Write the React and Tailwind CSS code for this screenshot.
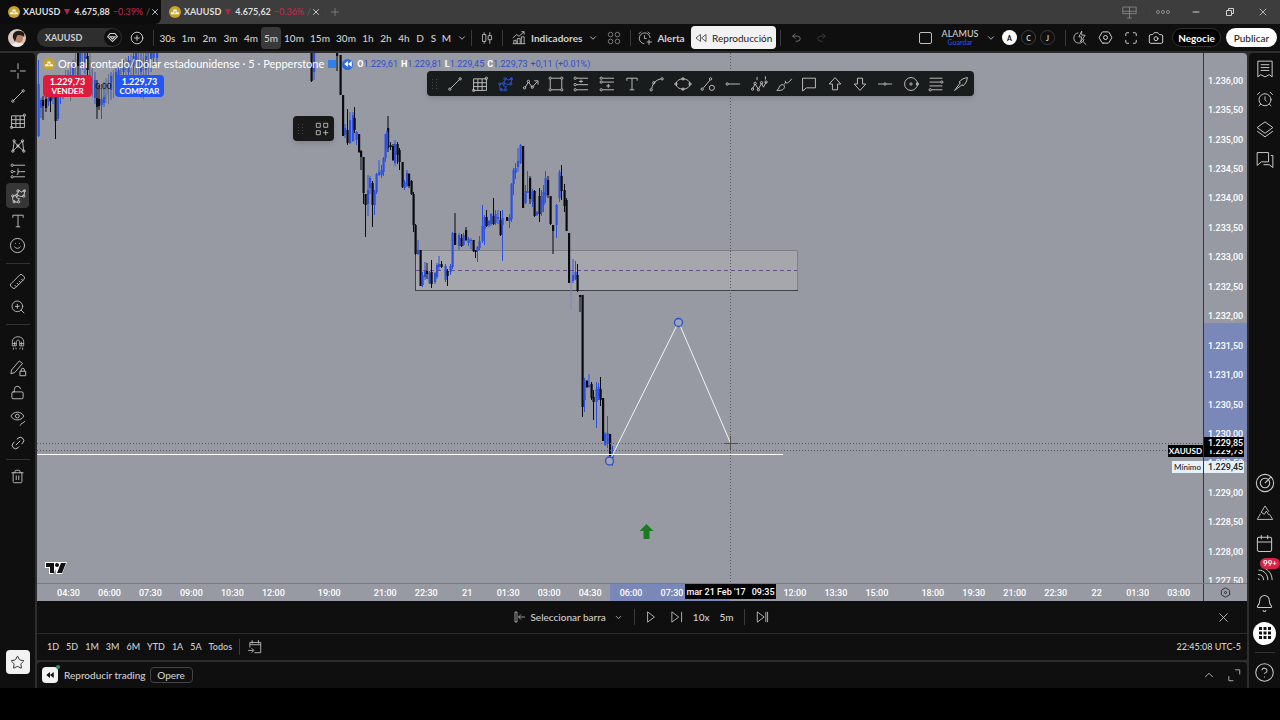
import { useState } from 'react';
import {
  AlarmClock, Bell, Calendar, Camera, ChevronDown, ChevronUp, CircleHelp, CirclePlus,
  Hexagon, Layers, Link2, LockOpen, Magnet, Maximize, Minus, Plus, Redo2, Ruler, Smile, Star, Trash2, Undo2, X, ZoomIn,
} from 'lucide-react';

// [x, high, low, open/close top, open/close bottom, color] -> b: blue, k: black, f: faded blue, g: gray
const candles = [
  [38.5, 60, 137, 84, 136, 'b'], [41, 98, 118, 100, 108, 'b'], [43, 96, 120, 100, 106, 'k'], [46, 96, 112, 99, 108, 'k'],
  [48.5, 94, 106, 98, 102, 'b'], [50.5, 92, 112, 97, 101, 'k'], [53, 88, 104, 95, 99, 'b'], [55.5, 94, 139, 97, 121, 'k'],
  [58, 84, 121, 88, 119, 'b'], [60.5, 80, 104, 84, 94, 'b'], [63, 76, 99, 80, 92, 'b'], [65.5, 70, 94, 76, 88, 'g'],
  [68, 70, 95, 76, 85, 'b'], [70.5, 68, 101, 72, 84, 'g'], [73, 60, 95, 66, 80, 'b'], [75.5, 53, 90, 58, 74, 'g'],
  [78, 53, 80, 53, 66, 'k'], [80, 53, 84, 53, 62, 'b'], [82.5, 53, 70, 53, 60, 'g'], [85, 53, 74, 53, 62, 'b'],
  [87.5, 53, 82, 56, 70, 'k'], [90, 53, 92, 60, 80, 'g'], [92.5, 64, 97, 70, 88, 'g'], [95, 72, 104, 80, 98, 'b'],
  [97, 80, 119, 98, 107, 'k'], [99, 85, 110, 99, 106, 'k'], [101.5, 84, 119, 99, 105, 'b'], [104, 82, 107, 97, 103, 'b'],
  [106, 78, 103, 95, 99, 'g'], [108.5, 74, 104, 80, 95, 'g'], [111, 72, 100, 76, 90, 'b'], [113.5, 70, 98, 74, 82, 'g'],
  [116, 68, 92, 72, 80, 'b'], [118.5, 66, 88, 70, 76, 'b'], [121, 62, 86, 68, 74, 'g'], [123.5, 60, 84, 64, 72, 'b'],
  [126, 58, 80, 62, 70, 'g'], [128.5, 56, 88, 60, 72, 'b'], [131, 54, 80, 60, 68, 'g'], [133.5, 53, 76, 56, 66, 'b'],
  [136, 53, 74, 53, 64, 'b'], [138.5, 53, 97, 56, 68, 'g'], [141, 53, 98, 60, 72, 'b'], [143.5, 53, 99, 58, 70, 'g'],
  [146, 53, 90, 56, 70, 'b'], [148.5, 53, 78, 53, 62, 'g'], [151, 53, 72, 53, 60, 'b'], [153.5, 53, 66, 53, 58, 'b'],
  [157, 53, 62, 53, 58, 'b'],
  [311.5, 53, 82, 53, 81, 'k'], [314, 53, 80, 53, 72, 'b'], [337, 53, 71, 53, 56, 'k'], [340.5, 55, 95, 55, 95, 'k'],
  [343, 95, 136, 95, 136, 'k'], [345, 124, 138, 128, 135, 'b'], [347.5, 109, 145, 130, 143, 'k'], [350, 112, 144, 120, 143, 'b'],
  [353, 112, 142, 115, 141, 'b'], [354.5, 107, 133, 118, 130, 'k'], [356.5, 131, 145, 132, 140, 'b'], [359, 134, 153, 134, 152, 'k'],
  [361, 150, 170, 151, 157, 'k'], [363.5, 157, 204, 157, 193, 'k'], [365.5, 194, 237, 194, 205, 'k'], [368, 175, 216, 190, 204, 'b'],
  [370, 176, 194, 178, 188, 'b'], [372.5, 181, 227, 183, 205, 'k'], [374.5, 190, 215, 192, 205, 'b'], [376.5, 173, 194, 174, 192, 'b'],
  [379, 160, 176, 172, 175, 'b'], [381.5, 165, 178, 170, 175, 'b'], [383.5, 157, 176, 158, 172, 'b'], [385.5, 134, 162, 134, 158, 'b'],
  [388, 116, 152, 128, 148, 'k'], [387, 130, 150, 132, 148, 'b'], [390.5, 142, 150, 145, 147, 'k'], [393, 144, 161, 146, 160, 'k'],
  [395, 140, 166, 144, 163, 'b'], [397.5, 142, 164, 144, 155, 'k'], [399.5, 148, 170, 150, 162, 'k'], [402.5, 162, 188, 162, 187, 'k'],
  [404.5, 180, 190, 182, 188, 'b'], [407, 170, 187, 173, 186, 'b'], [409, 173, 188, 174, 186, 'k'], [411.5, 180, 195, 181, 194, 'k'],
  [413.5, 192, 232, 194, 225, 'k'], [415.5, 224, 255, 225, 254, 'k'], [418, 240, 255, 250, 254, 'b'], [420.5, 250, 286, 250, 286, 'k'],
  [422.5, 272, 287, 275, 285, 'b'], [425, 262, 280, 271, 277, 'b'], [427, 263, 279, 271, 274, 'k'], [429.5, 271, 284, 273, 283, 'b'],
  [431.5, 260, 288, 272, 284, 'k'], [435, 272, 284, 273, 282, 'b'], [437, 263, 279, 265, 277, 'b'], [439, 256, 270, 264, 267, 'b'],
  [441.5, 261, 268, 264, 267, 'k'], [445.5, 264, 282, 266, 280, 'b'], [447.5, 269, 286, 271, 276, 'k'], [450.5, 264, 275, 266, 272, 'b'],
  [452.5, 232, 269, 233, 267, 'b'], [455, 213, 245, 233, 245, 'k'], [459, 233, 250, 235, 246, 'b'], [461.5, 234, 247, 238, 246, 'k'],
  [463.5, 233, 246, 235, 245, 'b'], [466, 227, 241, 230, 240, 'k'], [468.5, 237, 246, 239, 243, 'b'], [471, 238, 249, 240, 241, 'b'],
  [473.5, 240, 252, 240, 251, 'k'], [475.5, 250, 258, 250, 252, 'k'], [477.5, 246, 262, 247, 251, 'b'], [479.5, 236, 250, 241, 248, 'b'],
  [482.5, 205, 243, 226, 241, 'b'], [484.5, 215, 245, 217, 229, 'b'], [486.5, 210, 227, 217, 226, 'k'], [489, 220, 227, 221, 225, 'b'],
  [491, 213, 226, 214, 224, 'b'], [493.5, 198, 225, 216, 224, 'k'], [495.5, 210, 225, 214, 223, 'b'], [498, 210, 224, 217, 219, 'b'],
  [500.5, 211, 236, 220, 235, 'k'], [502.5, 210, 261, 218, 225, 'b'], [507, 217, 221, 217, 221, 'k'], [509.5, 214, 228, 218, 221, 'b'],
  [511.5, 183, 222, 184, 219, 'b'], [513.5, 168, 195, 170, 184, 'b'], [515.5, 163, 179, 168, 173, 'b'], [518, 148, 172, 161, 167, 'b'],
  [520.5, 144, 164, 145, 163, 'b'], [523, 146, 208, 146, 208, 'k'], [525.5, 185, 204, 191, 203, 'b'], [527.5, 171, 193, 191, 193, 'b'],
  [530, 176, 204, 178, 199, 'k'], [532.5, 189, 207, 191, 202, 'b'], [534.5, 190, 217, 191, 216, 'k'], [537, 211, 216, 212, 215, 'b'],
  [539.5, 188, 222, 196, 214, 'k'], [541.5, 190, 216, 197, 212, 'b'], [543.5, 185, 212, 192, 205, 'b'], [545.5, 171, 203, 178, 196, 'b'],
  [548, 176, 198, 180, 195, 'k'], [550.5, 196, 225, 196, 224, 'k'], [553, 225, 254, 225, 231, 'k'], [556.5, 204, 238, 205, 225, 'b'],
  [559.5, 170, 202, 172, 198, 'b'], [561.5, 165, 200, 176, 191, 'k'], [564.5, 184, 212, 190, 206, 'k'], [566.5, 198, 231, 200, 231, 'k'],
  [569, 233, 283, 233, 283, 'k'], [571, 272, 310, 280, 282, 'f'], [573, 259, 283, 275, 281, 'b'], [575.5, 261, 280, 272, 279, 'b'],
  [577.5, 264, 292, 275, 291, 'k'], [580, 295, 312, 295, 297, 'k'], [582.5, 295, 417, 295, 407, 'k'], [584.5, 378, 412, 380, 400, 'b'],
  [587, 380, 388, 381, 387, 'k'], [589, 374, 388, 385, 387, 'b'], [591.5, 382, 400, 384, 398, 'k'], [593.5, 390, 420, 397, 402, 'k'],
  [596.5, 382, 428, 389, 402, 'b'], [598.5, 383, 400, 387, 398, 'b'], [600.5, 377, 406, 389, 400, 'k'], [603, 398, 441, 398, 441, 'k'],
  [605, 432, 446, 434, 445, 'b'], [607.5, 416, 448, 433, 444, 'b'], [610, 434, 458, 434, 456, 'k'], [612.5, 446, 466, 452, 458, 'b'],
];

const candleColors = { b: '#2c50e0', k: '#0a0b10', f: '#7f86b8', g: '#6b6e7c' };

const intervals = [
  ['30s', 'w-[21px]'], ['1m', 'w-[21px]'], ['2m', 'w-[21px]'], ['3m', 'w-[21px]'], ['4m', 'w-[20px]'], ['5m', 'w-[20px]'],
  ['10m', 'w-[26px]'], ['15m', 'w-[26px]'], ['30m', 'w-[26px]'], ['1h', 'w-[18px]'], ['2h', 'w-[18px]'], ['4h', 'w-[18px]'],
  ['D', 'w-[14px]'], ['S', 'w-[13px]'], ['M', 'w-[13px]'],
];

const ranges = ['1D', '5D', '1M', '3M', '6M', 'YTD', '1A', '5A', 'Todos'];

const prices = [
  '1.236,00', '1.235,50', '1.235,00', '1.234,50', '1.234,00', '1.233,50', '1.233,00', '1.232,50', '1.232,00',
  '1.231,50', '1.231,00', '1.230,50', '1.230,00', '1.229,50', '1.229,00', '1.228,50', '1.228,00', '1.227,50',
];

// null leaves the market-closed gap, '' is a slot hidden under the crosshair date
const times = [
  '04:30', '06:00', '07:30', '09:00', '10:30', '12:00', null, '19:00', null, '21:00', '22:30', '21', '01:30', '03:00',
  '04:30', '06:00', '07:30', '', '', '12:00', '13:30', '15:00', null, '18:00', '19:30', '21:00', '22:30', '22',
  '01:30', '03:00',
];

// dots are the small anchor rings: [cx, cy]
const shapes = {
  cross: { d: 'M14 2v9M14 17v9M2 14h9M17 14h9' },
  line: { d: 'M7.4 20.6 20.6 7.4', dots: [[6, 22], [22, 6]] },
  grid: { d: 'M4 6h20v18H4zM4 12h20M4 18h20M10.7 6v18M17.3 6v18', dots: [[4, 24], [24, 5]] },
  pattern: { d: 'M6 22 8 7l6 7 7-8 2 16-9-8-8 8', dots: [[6, 22], [8, 6], [14, 14], [21, 6], [23, 22]] },
  forecast: { d: 'M7 5h18M7 15h3M18 15h7M14 10v9M14 15h4M7 23h18M14 19h-2', dots: [[5, 5], [5, 15], [5, 23]] },
  path: { d: 'M7 22c-3-5-1-10 4-9l1 4 4 1-3 6zM12 12l4-7 3 3 5-3v6l-3 4-5-1z', dots: [[6, 14], [8, 23], [15, 23], [14, 6], [24, 6], [23, 14], [12, 13]] },
  text: { d: 'M6 9V5h16v4M14 5v18M10.5 23h7' },
  zigzag: { d: 'M5 19 10 11l6 8 8-9M19 9h6v6', dots: [[4, 20], [10, 10], [16, 19]] },
  rect: { d: 'M7 5h14M7 23h14M5 7v14M23 7v14', dots: [[5, 5], [23, 5], [5, 23], [23, 23]] },
  long: { d: 'M7 5h18M7 15h18M7 23h18M14 7v5M11 10h6', dots: [[5, 5], [5, 15], [5, 23]] },
  short: { d: 'M7 5h18M7 11h18M7 23h18M16 14v6M13 17h6', dots: [[5, 5], [5, 11], [5, 23]] },
  curve: { d: 'M6 21C7 13 12 8 20 6', dots: [[5, 23], [9, 12], [22, 6]] },
  ellipse: { d: 'M3 14c1-5 5-8 11-8s10 3 11 8c-1 5-5 8-11 8S4 19 3 14z', dots: [[14, 6], [14, 22], [3, 14], [25, 14]] },
  measure: { d: 'M7 20 17 8M16 20a4 4 0 1 0 8 0 4 4 0 1 0-8 0', dots: [[5, 22], [18, 6]] },
  ray: { d: 'M7 14h18', dots: [[5, 14]] },
  elliott: { d: 'M4 21l4-7 5 8 5-9 3 6 4-8M11 3v5M24 2v5', dots: [[4, 22], [8, 13], [13, 23], [18, 12], [25, 11]] },
  brush: { d: 'M3 24c4-2 3-9 8-9 4 0 5 4 2 7-2 2-6 2-10 2zM14 15l3-4M16 9c0 5 4 5 10-3' },
  callout: { d: 'M4 5h20v15H10l-6 5z' },
  up: { d: 'M14 4l9 10h-5v9h-8v-9H5z' },
  down: { d: 'M14 24l9-10h-5V5h-8v9H5z' },
  hline: { d: 'M3 14h9M16 14h9', dots: [[14, 14]] },
  circle: { d: 'M4 14a10 10 0 1 0 20 0 10 10 0 1 0-20 0', dots: [[14, 14], [24, 14]] },
  fib: { d: 'M4 5h20M4 11h17M4 17h20M7 23h17', dots: [[23, 11], [5, 23]] },
  arrow: { d: 'M4 24 13 12l-2-1C15 6 19 5 24 4c-1 5-2 9-7 13l-1-2z' },
  candlesticks: { d: 'M9 4v4M9 20v4M6 8h6v12H6zM19 4v6M19 17v7M16 10h6v7h-6z' },
  indicators: { d: 'M3 24h22M5 24v-6h4v6M11 24v-9h5v9M18 24V12h5v12M3 14l7-6 4 3 9-8M18 3h5v5' },
  alarm: { d: 'M13 24a9.5 9.5 0 1 1 10-10M13 9v6h4M3 7l4-4M19 3l4 4M21 17v9M17 21h9' },
  rewind: { d: 'M13 7v14L4 14zM24 7v14l-9-7z' },
  fourDots: { d: 'M4 8a4 4 0 1 0 8 0 4 4 0 1 0-8 0M16 8a4 4 0 1 0 8 0 4 4 0 1 0-8 0M4 20a4 4 0 1 0 8 0 4 4 0 1 0-8 0M16 20a4 4 0 1 0 8 0 4 4 0 1 0-8 0' },
  quickSearch: { d: 'M11 5a9 9 0 1 0 10 11M19 20l6 6M17 2l-5 10h5l-2 9 8-12h-6z' },
  penLock: { d: 'M3 23l1-6L16 3l5 4L9 21zM17 19h9v7h-9zM19 19v-2a2.5 2.5 0 0 1 5 0v2' },
  eye: { d: 'M3 11c4-8 16-8 20 0-4 8-16 8-20 0zM10 11a3 3 0 1 0 6 0 3 3 0 1 0-6 0M17 26c2-1 1-4 4-4l4-3' },
  magnet: { d: 'M8 19H4v-7C4 0 24 0 24 12v7h-4M8 19h3v-7c0-4 6-4 6 0v7h3M4 15h7M17 15h7M6 22v4M10 22l1 3M22 22v4M18 22l-1 3M8 19V12M20 19v-7' },
  news: { d: 'M4 3h20v22l-4-3-6 3-6-3-4 3zM8 8h12M8 12h12M8 16h12' },
  layers: { d: 'M3 12 14 4l11 8-11 8zM3 17l11 8 11-8' },
  chat: { d: 'M3 5h16v13H9l-6 5zM22 9h3v17l-5-4H12' },
  target: { d: 'M3 14a11 11 0 1 0 22 0 11 11 0 1 0-22 0M8 14a6 6 0 1 0 12 0 6 6 0 1 0-12 0M14 14l8-8' },
  pyramid: { d: 'M14 3 8 13l5 3 3-5 4 6M7 15l-5 9h24l-5-8M14 3l6 9' },
  stream: { d: 'M4 22a2 2 0 0 1 2 2M4 16c5 0 8 3 8 8M5 10c8 0 13 6 13 14M12 7c7 2 12 9 12 17' },
  goTo: { d: 'M5 15V6h19v18H13M9 2v6M20 2v6M2 20h9M8 16l4 4-4 4M5 10h19' },
  selectBar: { d: 'M4 4h4v20H4zM11 14h13M16 9l-5 5 5 5' },
  play: { d: 'M8 5v18l12-9z' },
  step: { d: 'M5 5v18l12-9zM22 5v18' },
  skip: { d: 'M4 5v18l12-9zM19 5v18M22 5v18' },
  expand: { d: 'M16 5h8v8M5 16v8h8' },
  panes: { d: 'M3 5h22v11H3zM14 5v18M3 12h22M10 23h8' },
  favGrid: { d: 'M4 4h7v7H4zM17 4h7v7h-7zM4 17h7v7H4zM20.5 16v9M16 20.5h9' },
};

function Shape({ name, className = 'size-[18px]' }) {
  const { d, dots = [] } = shapes[name];
  return (
    <svg viewBox="0 0 28 28" className={className} fill="none" stroke="currentColor" strokeWidth="1.4" aria-hidden="true">
      <path d={d} />
      {dots.map(([cx, cy]) => (
        <circle key={`${cx}-${cy}`} cx={cx} cy={cy} r="1.8" />
      ))}
    </svg>
  );
}

function GoldCoin() {
  return (
    <svg viewBox="0 0 24 24" className="size-3 shrink-0" aria-hidden="true">
      <circle cx="12" cy="12" r="12" fill="#c9a227" />
      <path d="M9.5 7h5l1.5 4H8zM5 12.5h5.5l1.5 4H3.5zM13.5 12.5H19l1.5 4H12z" fill="#fff" />
    </svg>
  );
}

function Sep() {
  return <span className="h-4 w-px shrink-0 bg-[#3a3a3a]" />;
}

function Grip() {
  return (
    <svg viewBox="0 0 8 12" className="h-3 w-2 shrink-0 text-[#444]" fill="currentColor" aria-hidden="true">
      {[1, 4, 7, 10].map((y) => (
        <g key={y}>
          <rect x="1" y={y} width="1" height="1" />
          <rect x="5" y={y} width="1" height="1" />
        </g>
      ))}
    </svg>
  );
}

function Tab({ price, change, active }) {
  return (
    <div className={`flex w-[161px] shrink-0 items-center pr-1 pl-2 text-[9px] font-bold ${active ? 'rounded-br-md bg-[#0c0c0c]' : ''}`}>
      <GoldCoin />
      <span className="ml-[3px] text-[#dedede]">XAUUSD</span>
      <svg viewBox="0 0 6 6" className="mx-1 size-1.5 shrink-0" aria-hidden="true"><path d="M0 0h6L3 6z" fill="#b8204a" /></svg>
      <span className="text-[#dedede]">{price}</span>
      <span className="ml-[3px] font-normal text-[#d0264e]">{change}</span>
      <span className="ml-[3px] font-normal text-[#666]">/</span>
      <button aria-label="Cerrar pestaña" className="ml-auto text-[#dedede]"><X size={10} strokeWidth={2} /></button>
    </div>
  );
}

function TopBar({ interval, setInterval }) {
  return (
    <header className="flex h-[27px] items-center bg-[#0f0f0f] text-[#d0d0d0]">
      <button aria-label="Perfil" className="ml-2 size-[18px] shrink-0 overflow-hidden rounded-full">
        <svg viewBox="0 0 18 18" aria-hidden="true">
          <rect width="18" height="18" fill="#d8c8bd" />
          <path d="M3 18c1-4 4-5 7-5s6 2 7 5z" fill="#f1ece8" />
          <ellipse cx="11" cy="9" rx="4" ry="5" fill="#b88468" />
          <path d="M5 9c-1-5 3-8 7-7 4 0 5 3 4 6-2-2-5-2-6-2-2 1-2 5-3 7z" fill="#231a18" />
        </svg>
      </button>
      <button className="ml-[11px] flex h-[19px] w-[85px] shrink-0 items-center justify-between rounded-full bg-[#2e2e2e] pr-px pl-2 text-[9px] font-bold">
        XAUUSD
        <span className="grid size-[17px] place-items-center rounded-full bg-[#0f0f0f]">
          <svg viewBox="0 0 16 16" className="size-[13px]" fill="none" stroke="currentColor" strokeWidth="1.3" aria-hidden="true">
            <path d="M5 3h6l3 4-6 6-6-6zM5 7h6l-3 3z" />
          </svg>
        </span>
      </button>
      <button aria-label="Comparar" className="mr-[9px] ml-2 shrink-0"><CirclePlus size={14} strokeWidth={1.6} /></button>
      <Sep />
      <div className="ml-[3px] flex font-medium">
        {intervals.map(([label, width]) => (
          <button
            key={label}
            onClick={() => setInterval(label)}
            className={`flex h-[22px] items-center justify-center rounded ${width} ${interval === label ? 'bg-[#3a3a3a]' : ''}`}
          >
            {label}
          </button>
        ))}
      </div>
      <button aria-label="Más intervalos" className="mr-1 ml-1"><ChevronDown size={10} /></button>
      <Sep />
      <button aria-label="Velas" className="mx-[7px]"><Shape name="candlesticks" className="size-4" /></button>
      <Sep />
      <button className="ml-2 flex items-center gap-1 font-bold"><Shape name="indicators" className="size-4" />Indicadores</button>
      <button aria-label="Favoritos" className="ml-1.5"><ChevronDown size={10} /></button>
      <button aria-label="Plantillas" className="mr-2 ml-2 text-[#909090]"><Shape name="fourDots" className="size-4" /></button>
      <Sep />
      <button className="ml-1.5 flex items-center gap-1 font-bold"><Shape name="alarm" className="size-4" />Alerta</button>
      <button className="mr-1 ml-1.5 flex h-[23px] w-[85px] shrink-0 items-center justify-center gap-1 rounded bg-[#f2f2f2] text-[#1c1c1c]">
        <Shape name="rewind" className="size-3.5" />Reproducción
      </button>
      <Sep />
      <button aria-label="Deshacer" className="ml-2.5 text-[#909090]"><Undo2 size={11} strokeWidth={1.6} /></button>
      <button aria-label="Rehacer" className="ml-[14px] text-[#4a4a4a]"><Redo2 size={11} strokeWidth={1.6} /></button>

      <div className="ml-auto flex items-center pr-[3px]">
        <button aria-label="Diseño" className="h-3 w-[13px] rounded-xs border border-[#c0c0c0]" />
        <button className="ml-2.5 flex w-9 flex-col items-center text-[9px] leading-[9px] font-medium">
          ALAMUS
          <span className="text-[7px] leading-[8px] text-[#2450e8]">Guardar</span>
        </button>
        <button aria-label="Diseños" className="mr-[6px] ml-2"><ChevronDown size={10} /></button>
        <div className="flex gap-1 text-[7px] font-bold">
          <button className="size-[15px] rounded-full bg-white text-black">A</button>
          <button className="size-[15px] rounded-full border border-[#3c3c3c]">C</button>
          <button className="size-[15px] rounded-full border border-[#3c3c3c]">J</button>
        </div>
        <span className="mr-1.5 ml-2.5 flex"><Sep /></span>
        <button aria-label="Búsqueda rápida"><Shape name="quickSearch" className="size-4" /></button>
        <button aria-label="Ajustes" className="relative ml-2.5 grid place-items-center">
          <Hexagon size={15} strokeWidth={1.6} className="rotate-90" />
          <span className="absolute size-[5px] rounded-full border border-current" />
        </button>
        <button aria-label="Pantalla completa" className="ml-[11px]"><Maximize size={14} strokeWidth={1.6} /></button>
        <button aria-label="Captura" className="ml-2.5"><Camera size={16} strokeWidth={1.5} /></button>
        <button className="ml-2 h-[19px] w-[49px] rounded-full border border-[#2e2e2e] bg-black font-bold text-white">Negocie</button>
        <button className="ml-[5px] h-[19px] w-[51px] rounded-full bg-white font-medium text-[#1c1c1c]">Publicar</button>
      </div>
    </header>
  );
}

const railButton = 'grid h-[25px] w-[23px] place-items-center rounded';

function LeftRail() {
  return (
    <aside className="flex w-[35px] shrink-0 flex-col items-center rounded-tr bg-[#0f0f0f] pt-[5px] pb-[14px] text-[#c8c8c8]">
      <button aria-label="Cursor" className={railButton}><Shape name="cross" /></button>
      <button aria-label="Línea" className={railButton}><Shape name="line" /></button>
      <button aria-label="Gann" className={railButton}><Shape name="grid" /></button>
      <button aria-label="Patrones" className={railButton}><Shape name="pattern" /></button>
      <button aria-label="Previsión" className={railButton}><Shape name="forecast" /></button>
      <button aria-label="Formas" className={`${railButton} bg-[#363636]`}><Shape name="path" /></button>
      <button aria-label="Texto" className={railButton}><Shape name="text" /></button>
      <button aria-label="Iconos" className={railButton}><Smile size={17} strokeWidth={1.3} /></button>
      <span className="my-[5px] h-px w-6 bg-[#333]" />
      <button aria-label="Medir" className={railButton}><Ruler size={17} strokeWidth={1.3} className="rotate-90" /></button>
      <button aria-label="Ampliar" className={railButton}><ZoomIn size={16} strokeWidth={1.3} /></button>
      <span className="my-[5px] h-px w-6 bg-[#333]" />
      <button aria-label="Imán" className={railButton}><Shape name="magnet" className="size-4" /></button>
      <button aria-label="Modo dibujo" className={railButton}><Shape name="penLock" /></button>
      <button aria-label="Bloquear" className={railButton}><LockOpen size={15} strokeWidth={1.4} /></button>
      <button aria-label="Ocultar" className={railButton}><Shape name="eye" /></button>
      <button aria-label="Sincronizar" className={railButton}><Link2 size={16} strokeWidth={1.4} className="-rotate-45" /></button>
      <span className="my-1 h-px w-6 bg-[#333]" />
      <button aria-label="Eliminar" className={railButton}><Trash2 size={15} strokeWidth={1.4} /></button>
      <button aria-label="Favoritos" className="mt-auto grid size-6 place-items-center rounded bg-[#f2f2f2] text-[#1c1c1c]">
        <Star size={15} strokeWidth={1.4} />
      </button>
    </aside>
  );
}

const sideButton = 'grid h-[30px] w-full place-items-center';

function RightRail() {
  return (
    <aside className="flex w-[31px] shrink-0 flex-col items-center rounded-tl bg-[#0f0f0f] pt-px pb-px text-[#c8c8c8]">
      <button aria-label="Lista de seguimiento" className={sideButton}><Shape name="news" className="size-5" /></button>
      <button aria-label="Alertas" className={sideButton}><AlarmClock size={18} strokeWidth={1.3} /></button>
      <button aria-label="Datos" className={sideButton}><Shape name="layers" className="size-5" /></button>
      <button aria-label="Chats" className={sideButton}><Shape name="chat" className="size-5" /></button>
      <button aria-label="Filtros" className={`${sideButton} mt-auto`}><Shape name="target" className="size-[22px]" /></button>
      <button aria-label="Pine" className={sideButton}><Shape name="pyramid" className="size-[18px]" /></button>
      <button aria-label="Calendario" className={sideButton}><Calendar size={19} strokeWidth={1.3} /></button>
      <button aria-label="Comunidad" className={`${sideButton} relative`}>
        <Shape name="stream" className="size-5" />
        <span className="absolute top-0 right-0 rounded-full bg-[#d6234a] px-[3px] text-[8px] leading-[11px] font-bold text-white">99+</span>
      </button>
      <button aria-label="Notificaciones" className={sideButton}><Bell size={19} strokeWidth={1.3} /></button>
      <button aria-label="Productos" className={sideButton}>
        <span className="grid size-[23px] place-items-center rounded-full bg-white">
          <svg viewBox="0 0 12 12" className="size-3" fill="#111">
            {[0, 4.5, 9].map((y) => [0, 4.5, 9].map((x) => <rect key={`${x}-${y}`} x={x} y={y} width="3" height="3" />))}
          </svg>
        </span>
      </button>
      <span className="mt-1 mb-1 h-px w-5 bg-[#333]" />
      <button aria-label="Ayuda" className={sideButton}><CircleHelp size={21} strokeWidth={1.2} /></button>
    </aside>
  );
}

function Plot() {
  return (
    <svg viewBox="37 53 1166 530" preserveAspectRatio="none" className="absolute inset-0 size-full" aria-label="XAUUSD">
      <rect x="415.5" y="250.5" width="382" height="40" fill="#a5a7ad" />
      <path d="M415 250.5H797.5V290" stroke="#7e8088" fill="none" />
      <path d="M415 290.5H798M415.5 250V290" stroke="#3e4047" />
      <path d="M416 270.5H797" stroke="#69508a" strokeDasharray="4 3" />
      {candles.map(([x, high, low, top, bottom, c]) => (
        <g key={x} fill={candleColors[c]}>
          <rect x={x - 0.5} y={high} width="1" height={low - high} />
          <rect x={x - 1} y={top} width={c === 'g' ? 1 : 2.2} height={bottom - top} />
        </g>
      ))}
      <path d="M37 443.5H1203M37 450.5H1203M730.5 53V583" stroke="#55575f" strokeDasharray="1 2" />
      <path d="M37 454.5H783" stroke="#fff" />
      <path d="M611 458 678.5 322 730.5 443" stroke="#f4f4f4" fill="none" />
      <path d="M724 443.5h14M730.5 436v14" stroke="#55524c" />
      <circle cx="678.5" cy="322.5" r="4" fill="#9ea4bb" stroke="#2d50c8" strokeWidth="1.3" />
      <circle cx="609.5" cy="461" r="4" fill="#9ea4bb" stroke="#2d50c8" strokeWidth="1.3" />
      <path d="M646.5 524l7 7h-4v8h-6v-8h-4z" fill="#1c7a24" />
    </svg>
  );
}

const toolbarTools = [
  'line', 'grid', 'path', 'zigzag', 'rect', 'long', 'short', 'text', 'curve', 'ellipse', 'measure', 'ray', 'elliott',
  'brush', 'callout', 'up', 'down', 'hline', 'circle', 'fib', 'arrow',
];

function Chart() {
  return (
    <div className="relative flex-1 overflow-hidden">
      <Plot />

      <div className="absolute top-1 left-1.5 flex items-center text-[11px] leading-[14px] text-white">
        <GoldCoin />
        <h1 className="ml-[3px]">Oro al contado/Dólar estadounidense · 5 · Pepperstone</h1>
        <span className="ml-1 h-2 w-[8px] bg-[#2f80e8]" />
        <span className="ml-1.5 grid size-[11px] place-items-center rounded-full bg-[#2f6be0]">
          <svg viewBox="0 0 10 8" className="h-1.5 w-2" fill="#fff"><path d="M5 0v8L0 4zM10 0v8L5 4z" /></svg>
        </span>
        <p className="ml-1 flex gap-[3px] font-['Roboto',sans-serif] text-[9px] text-[#2f4fd0]">
          <span><b className="text-white">O</b>1.229,61</span>
          <span><b className="text-white">H</b>1.229,81</span>
          <span><b className="text-white">L</b>1.229,45</span>
          <span><b className="text-white">C</b>1.229,73</span>
          <span>+0,11 (+0.01%)</span>
        </p>
      </div>

      <div className="absolute top-[22px] left-1.5 flex items-center text-center text-[9px] font-bold text-white">
        <button className="h-[22px] w-[49px] rounded bg-[#e0193f] leading-[10px]">
          1.229,73<span className="block text-[8px] leading-[9px]">VENDER</span>
        </button>
        <span className="w-[23px] text-[8px] font-normal text-black">0.00</span>
        <button className="h-[22px] w-[49px] rounded bg-[#2456f5] leading-[10px]">
          1.229,73<span className="block text-[8px] leading-[9px]">COMPRAR</span>
        </button>
      </div>

      <div className="absolute top-[63px] left-64 flex h-[25px] w-[41px] items-center justify-between rounded bg-[#191919] px-1 text-[#d0d0d0] shadow-md">
        <Grip />
        <button aria-label="Añadir herramienta"><Shape name="favGrid" className="size-4" /></button>
      </div>

      <div className="absolute top-[18px] left-[390px] flex h-[25px] w-[547px] items-center rounded bg-[#191c1c] pl-1 text-[#c8c8c8] shadow-md">
        <Grip />
        <div className="ml-[3px] flex flex-1">
          {toolbarTools.map((tool) => (
            <button key={tool} aria-label={tool} className={`grid flex-1 place-items-center ${tool === 'path' ? 'text-[#2b55e0]' : ''}`}>
              <Shape name={tool} />
            </button>
          ))}
        </div>
      </div>

      <svg viewBox="0 0 24 14" className="absolute bottom-2 left-[7px] h-3.5 w-6" aria-label="TradingView">
        <path d="M1 1h22l-5 12h-6V8L9 13H5V7H1z" fill="#fff" />
        <path d="M2 2h8v10H6V6H2zM17 2h5l-4 10h-5z" fill="#111" />
        <circle cx="13" cy="4" r="2" fill="#111" />
      </svg>

      <span className="absolute top-[392px] right-0 bg-black px-px text-[8px] leading-[12px] font-bold text-white">XAUUSD</span>
      <span className="absolute top-[408px] right-0 bg-[#e6f1fa] px-[2px] text-[8px] leading-[12px] font-medium text-[#222]">Mínimo</span>
    </div>
  );
}

function PriceAxis() {
  return (
    <div className="relative flex w-11 flex-col overflow-hidden border-l border-[#33353c] font-['Roboto',sans-serif] text-[9px] font-medium text-white">
      <span className="absolute top-[270px] h-[139px] w-full bg-[#7a88b9]" />
      <div className="relative mt-[13px] -mb-[13px] flex flex-1 flex-col">
        {prices.map((price) => (
          <span key={price} className="flex flex-1 items-center pl-1">{price}</span>
        ))}
      </div>
      <span className="absolute top-[392px] w-10 bg-black pl-1 leading-[12px]">1.229,73</span>
      <span className="absolute top-[384px] w-10 bg-black pl-1 leading-[13px]">1.229,85</span>
      <span className="absolute top-[408px] w-10 bg-[#e6f1fa] pl-1 leading-[12px] text-[#222]">1.229,45</span>
    </div>
  );
}

function TimeAxis() {
  return (
    <div className="flex h-[18px] border-t border-[#777a84] font-['Roboto',sans-serif] text-[9px] font-medium text-white">
      <div className="relative flex flex-1 items-center pr-1 pl-[11px]">
        <span className="absolute inset-y-0 left-[573px] w-[120px] bg-[#7a88b9]" />
        {times.map((time, i) => (
          <span key={i} className={`relative basis-0 text-center ${time === null ? 'grow-15' : 'grow-41'}`}>{time}</span>
        ))}
        <span className="absolute top-0 left-[648px] flex h-[15px] w-[91px] items-center justify-center gap-1.5 bg-black">
          <span>mar 21 Feb '17</span><span>09:35</span>
        </span>
      </div>
      <button aria-label="Ajustes de escala" className="relative grid w-11 place-items-center border-l border-[#33353c] text-[#2a2c33]">
        <Hexagon size={11} />
        <span className="absolute size-[3px] rounded-full border border-current" />
      </button>
    </div>
  );
}

export default function App() {
  const [interval, setInterval] = useState('5m');

  return (
    <div className="flex min-h-screen flex-col bg-black pb-8 font-['Lato','Noto_Sans',sans-serif] text-[10px] leading-3">
      <div className="flex h-6 bg-[#3d3d3d]">
        <Tab price="4.675,88" change="−0.39%" active />
        <Tab price="4.675,62" change="−0.36%" />
        <div className="flex items-center text-[#8a8a8a]">
          <Sep />
          <button aria-label="Nueva pestaña" className="ml-1.5"><Plus size={12} strokeWidth={1.5} /></button>
        </div>
        <div className="ml-auto flex items-center pr-[11px] text-[#d0d0d0]">
          <button aria-label="Paneles" className="mr-2 text-[#8a8a8a]"><Shape name="panes" className="size-[17px]" /></button>
          <Sep />
          <button aria-label="Más" className="ml-2 text-[#8a8a8a]">
            <svg viewBox="0 0 16 6" className="h-1.5 w-4" fill="none" stroke="currentColor"><circle cx="3" cy="3" r="1.5" /><circle cx="8" cy="3" r="1.5" /><circle cx="13" cy="3" r="1.5" /></svg>
          </button>
          <button aria-label="Minimizar" className="ml-5"><Minus size={10} strokeWidth={2.5} /></button>
          <button aria-label="Restaurar" className="ml-6">
            <svg viewBox="0 0 10 10" className="size-2.5" fill="none" stroke="currentColor"><path d="M1.5 3.5h5v5h-5zM3.5 3V1.5h5v5H7" /></svg>
          </button>
          <button aria-label="Cerrar" className="ml-[22px]"><X size={12} strokeWidth={1.6} /></button>
        </div>
      </div>

      <TopBar interval={interval} setInterval={setInterval} />

      <div className="flex flex-1 gap-0.5 bg-[#2e2e2e] pt-0.5">
        <LeftRail />

        <main className="flex min-w-0 flex-1 flex-col">
          <div className="flex flex-1 flex-col overflow-hidden rounded-t bg-[#979aa3]">
            <div className="flex flex-1">
              <Chart />
              <PriceAxis />
            </div>
            <TimeAxis />
          </div>

          <div className="relative flex h-8 items-center justify-center bg-[#0f0f0f] font-medium text-[#d0d0d0]">
            <button className="flex items-center gap-[3px]"><Shape name="selectBar" className="size-3.5" />Seleccionar barra</button>
            <button aria-label="Opciones" className="mr-[11px] ml-2"><ChevronDown size={9} /></button>
            <Sep />
            <button aria-label="Reproducir" className="ml-2"><Shape name="play" className="size-4" /></button>
            <button aria-label="Avanzar" className="ml-2.5"><Shape name="step" className="size-4" /></button>
            <button className="ml-2">10x</button>
            <button className="mr-2.5 ml-2.5">5m</button>
            <Sep />
            <button aria-label="Ir al final" className="ml-2.5"><Shape name="skip" className="size-4" /></button>
            <button aria-label="Cerrar reproducción" className="absolute right-4"><X size={15} strokeWidth={1.3} /></button>
          </div>

          <div className="flex h-[27px] items-center border-t border-[#2a2a2a] bg-[#0f0f0f] pr-[6px] pl-2.5 text-[9px] font-medium text-[#d0d0d0]">
            <div className="flex gap-[7px]">
              {ranges.map((range) => <button key={range}>{range}</button>)}
            </div>
            <span className="mr-[7px] ml-[7px] flex"><Sep /></span>
            <button aria-label="Ir a fecha"><Shape name="goTo" className="size-4" /></button>
            <button className="ml-auto">22:45:08 UTC-5</button>
          </div>

          <div className="mt-0.5 flex h-[26px] items-center rounded-t bg-[#0f0f0f] px-[5px] pb-px font-medium text-[#d0d0d0]">
            <span className="relative grid size-4 place-items-center rounded bg-[#f2f2f2]">
              <svg viewBox="0 0 10 8" className="h-1.5 w-2" fill="#111"><path d="M5 0v8L0 4zM10 0v8L5 4z" /></svg>
              <span className="absolute -top-0.5 -right-0.5 size-1 rounded-full bg-[#2f9272]" />
            </span>
            <span className="ml-[6px]">Reproducir trading</span>
            <button className="ml-1 h-4 w-[43px] rounded border border-[#444]">Opere</button>
            <button aria-label="Abrir panel" className="mr-2.5 ml-auto"><ChevronUp size={14} strokeWidth={1.4} /></button>
            <button aria-label="Maximizar panel"><Shape name="expand" className="size-4" /></button>
          </div>
        </main>

        <RightRail />
      </div>
    </div>
  );
}
